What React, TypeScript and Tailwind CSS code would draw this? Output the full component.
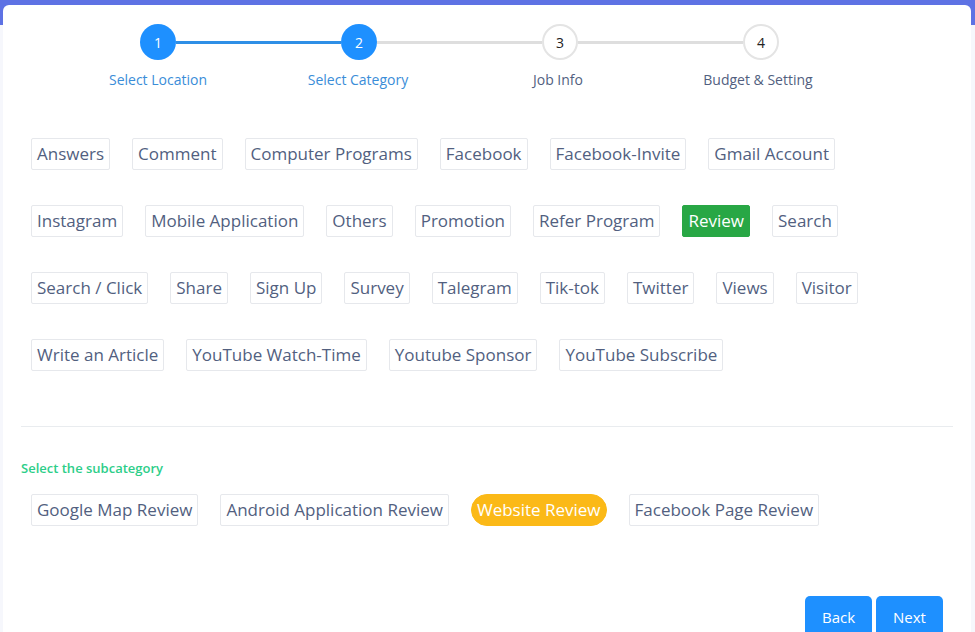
import React, { useState } from "react";

const categories = [
  "Answers",
  "Comment",
  "Computer Programs",
  "Facebook",
  "Facebook-Invite",
  "Gmail Account",
  "Instagram",
  "Mobile Application",
  "Others",
  "Promotion",
  "Refer Program",
  "Review",
  "Search",
  "Search / Click",
  "Share",
  "Sign Up",
  "Survey",
  "Talegram",
  "Tik-tok",
  "Twitter",
  "Views",
  "Visitor",
  "Write an Article",
  "YouTube Watch-Time",
  "Youtube Sponsor",
  "YouTube Subscribe",
];

const subcategories = [
  "Google Map Review",
  "Android Application Review",
  "Website Review",
  "Facebook Page Review",
];

const steps = [
  { n: 1, label: "Select Location", done: true },
  { n: 2, label: "Select Category", done: true },
  { n: 3, label: "Job Info", done: false },
  { n: 4, label: "Budget & Setting", done: false },
];

function StepCircle({ n, done }: { n: number; done: boolean }) {
  return (
    <div
      className={`w-[36px] h-[36px] shrink-0 rounded-full flex items-center justify-center text-[14px] ${
        done ? "bg-[#1e90ff] text-white" : "bg-white border-2 border-[#e4e4e4] text-[#222]"
      }`}
    >
      {n}
    </div>
  );
}

export default function App() {
  const [category, setCategory] = useState("Review");
  const [sub, setSub] = useState("Website Review");

  return (
    <div
      className="min-h-screen pt-[5px] bg-[linear-gradient(to_bottom,#5e72e4_25px,#f6f7fc_25px)]"
      style={{ fontFamily: '"Open Sans", "Noto Sans", sans-serif' }}
    >
      <div className="ml-[3px] mr-[4px] bg-white rounded-t-[6px] px-[18px] pt-[19px] min-h-[640px]">
        {/* Stepper */}
        <div className="flex items-center ml-[119px]">
          {steps.map((s, i) => (
            <React.Fragment key={s.n}>
              <StepCircle n={s.n} done={s.done} />
              {i < steps.length - 1 && (
                <div
                  className={`w-[165px] h-[3px] ${
                    steps[i + 1].done ? "bg-[#2f8fe6]" : "bg-[#dedede]"
                  }`}
                />
              )}
            </React.Fragment>
          ))}
        </div>
        <div className="grid grid-cols-[repeat(4,200px)] ml-[37px] mt-[10px]">
          {steps.map((s) => (
            <div
              key={s.n}
              className={`text-center text-[14px] leading-[20px] ${
                s.done ? "text-[#3a8dd8]" : "text-[#525f7f]"
              }`}
            >
              {s.label}
            </div>
          ))}
        </div>

        {/* Categories */}
        <div className="px-[10px] mt-[48px] flex flex-wrap gap-x-[22px] gap-y-[35px]">
          {categories.map((c) => (
            <button
              key={c}
              onClick={() => setCategory(c)}
              className={`h-[32px] px-[5px] flex items-center text-[17px] rounded-[2px] border ${
                category === c
                  ? "bg-[#28a745] border-[#28a745] text-white"
                  : "bg-white border-[#e6e8ec] text-[#525f7f]"
              }`}
            >
              {c}
            </button>
          ))}
        </div>

        <div className="mt-[55px] border-t border-[#e9ecef]" />

        <p className="mt-[32px] text-[13px] leading-[18px] font-semibold text-[#2dce89]">
          Select the subcategory
        </p>

        <div className="px-[10px] mt-[17px] flex flex-wrap gap-x-[22px] gap-y-[20px]">
          {subcategories.map((c) => (
            <button
              key={c}
              onClick={() => setSub(c)}
              className={`h-[32px] px-[5px] flex items-center text-[17px] border ${
                sub === c
                  ? "bg-[#fbb917] border-[#fbb917] text-white rounded-full"
                  : "bg-white border-[#e6e8ec] text-[#525f7f] rounded-[2px]"
              }`}
            >
              {c}
            </button>
          ))}
        </div>

        <div className="mt-[70px] flex justify-end gap-[4px] mr-[10px]">
          <button className="h-[42px] w-[67px] rounded-[5px] bg-[#1e90ff] text-white text-[15px] leading-[38px] pb-[1px]">
            Back
          </button>
          <button className="h-[42px] w-[67px] rounded-[5px] bg-[#1e90ff] text-white text-[15px] leading-[38px] pb-[1px]">
            Next
          </button>
        </div>
      </div>
    </div>
  );
}
